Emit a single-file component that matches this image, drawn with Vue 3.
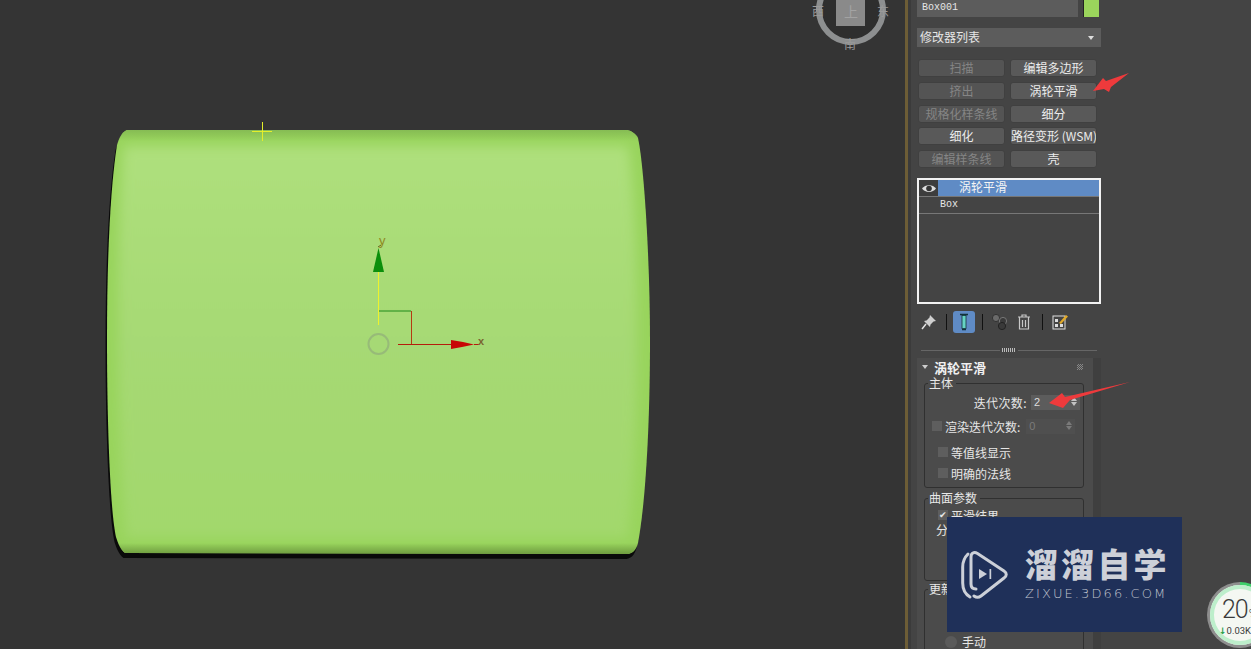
<template>
  <div class="app">
    <main class="viewport">
      <svg class="scene" width="905" height="649" viewBox="0 0 905 649">
        <defs>
          <filter id="soft" x="-10%" y="-10%" width="120%" height="120%">
            <feGaussianBlur stdDeviation="6" />
          </filter>
          <clipPath id="bodyClip"><path :d="bodyPath" /></clipPath>
          <linearGradient id="bodyFill" x1="0" y1="0" x2="0" y2="1">
            <stop offset="0" stop-color="#aee07c" />
            <stop offset="0.5" stop-color="#a6d974" />
            <stop offset="1" stop-color="#a2d86c" />
          </linearGradient>
          <linearGradient id="topBand" x1="0" y1="0" x2="0" y2="1">
            <stop offset="0" stop-color="#86bc54" />
            <stop offset="1" stop-color="#86bc54" stop-opacity="0" />
          </linearGradient>
          <linearGradient id="bottomBand" x1="0" y1="0" x2="0" y2="1">
            <stop offset="0" stop-color="#6f9c40" stop-opacity="0" />
            <stop offset="1" stop-color="#6f9c40" />
          </linearGradient>
        </defs>
        <!-- shadow edge -->
        <path :d="bodyPath" fill="#0a0a0a" transform="translate(-1.5 5)" />
        <path :d="bodyPath" fill="#98d45c" />
        <g clip-path="url(#bodyClip)">
          <path d="M124 146 L628 146 C640 220 640 440 628 538 L126 538 C116 440 116 220 124 146 Z" fill="url(#bodyFill)" filter="url(#soft)" />
          <rect x="100" y="130" width="560" height="11" fill="url(#topBand)" />
          <rect x="100" y="543" width="560" height="11" fill="url(#bottomBand)" />
        </g>

        <!-- cursor -->
        <path d="M252 131.5H272M262.5 122V141" stroke="#e4ef2a" stroke-width="1" />

        <!-- transform gizmo -->
        <path d="M378.5 272V325" stroke="#eef22c" stroke-width="1" />
        <path d="M378.5 248L384 272H373Z" fill="#0b8f0b" />
        <path d="M379 311H411" stroke="#1f8a1a" stroke-width="1" />
        <path d="M411.5 311V344" stroke="#b53a12" stroke-width="1" />
        <path d="M398 344.5H451" stroke="#b51c0c" stroke-width="1" />
        <path d="M451 340L463 342L474 344.5L462 347L451 349Z" fill="#c80606" />
        <path d="M474 344.5H479" stroke="#b51c0c" stroke-width="1" />
        <circle cx="378.500" cy="344" r="10" fill="none" stroke="#97bb78" stroke-width="2" />
        <path d="M378 247L381 245" stroke="#6b5b1c" stroke-width="1" />
        <text x="379" y="245" class="axis axis-y">y</text>
        <text x="478" y="345" class="axis axis-x">x</text>

        <!-- view compass -->
        <circle cx="851" cy="10" r="32" fill="#2e2e2e" stroke="#8d8f90" stroke-width="6" />
        <rect x="836" y="-4" width="29" height="30" fill="#8a8a8a" />
        <text x="851" y="17" class="cube-label">上</text>
        <text x="818" y="16" class="compass">西</text>
        <text x="883" y="16" class="compass">东</text>
        <text x="850" y="49" class="compass">南</text>
      </svg>
    </main>

    <aside class="panel">
      <div class="column">
        <div class="name-row">
          <div class="name-field">Box001</div>
          <div class="swatch"></div>
        </div>
        <div class="dropdown">
          <span>修改器列表</span>
          <i class="caret"></i>
        </div>
        <div class="mod-grid">
          <button v-for="b in modButtons" :key="b.label" class="mod-btn" :class="{ off: b.off }">{{ b.label }}</button>
        </div>
        <div class="stack">
          <div class="stack-top">
            <span class="eye">
              <svg width="16" height="11" viewBox="0 0 16 11">
                <path d="M1 5.5C4 1 12 1 15 5.5C12 10 4 10 1 5.5Z" fill="#ddd" />
                <circle cx="8" cy="5.5" r="2.8" fill="#333" />
              </svg>
            </span>
            <span class="stack-name">涡轮平滑</span>
          </div>
          <div class="stack-box">Box</div>
        </div>
        <div class="tools">
          <svg class="tool" width="18" height="18" viewBox="0 0 18 18">
            <path d="M10 2L16 8L13.5 8.5L10.5 11.5L10 14L4 8L6.500 7.5L9.5 4.5Z" fill="#cfcfcf" />
            <path d="M6 11L2 16" stroke="#e4e4e4" stroke-width="1.500" />
          </svg>
          <i class="tool-sep first"></i>
          <span class="tool-on">
            <svg width="10" height="18" viewBox="0 0 10 18">
              <path d="M1 1.5H9M3 16.5H7" stroke="#12333b" stroke-width="1.5" fill="none" />
              <rect x="3" y="2.500" width="4" height="13" fill="#66d4c4" stroke="#12333b" stroke-width="0.8" />
            </svg>
          </span>
          <i class="tool-sep"></i>
          <svg class="tool" width="18" height="18" viewBox="0 0 18 18">
            <circle cx="5" cy="5" r="3.600" fill="#6a6a6a" stroke="#333" />
            <circle cx="12" cy="8" r="3.600" fill="#3a3a3a" stroke="#777" />
            <circle cx="11" cy="13" r="3.600" fill="#3a3a3a" stroke="#222" />
          </svg>
          <svg class="tool trash" width="14" height="18" viewBox="0 0 14 18">
            <path d="M1 4H13M5 4V2H9V4M2.5 4.5V16H11.5V4.5M5.5 7V14M8.5 7V14" stroke="#c8c8c8" stroke-width="1.2" fill="none" />
          </svg>
          <i class="tool-sep last"></i>
          <svg class="tool" width="18" height="18" viewBox="0 0 18 18">
            <rect x="2" y="3" width="12" height="13" fill="#444" stroke="#ddd" />
            <path d="M4 6H7V9H4ZM9 11H12V14H9ZM4 11H7V14H4Z" fill="#ddd" />
            <path d="M8 10L15 2L17 3.500L10 11Z" fill="#e0a92a" />
          </svg>
        </div>
        <div class="divider"><span class="grip"></span></div>

        <section class="rollout">
          <header class="roll-head">
            <i class="roll-caret"></i>
            <b>涡轮平滑</b>
            <span class="dots"></span>
          </header>

          <fieldset class="group main-group">
            <legend>主体</legend>
            <div class="spin-row">
              <label class="wide">迭代次数:</label>
              <span class="spinner">2<i class="spin-arrows"></i></span>
            </div>
            <div class="spin-row dim">
              <i class="check outer"></i>
              <label>渲染迭代次数:</label>
              <span class="spinner off">0<i class="spin-arrows"></i></span>
            </div>
            <div class="check-row first"><i class="check"></i>等值线显示</div>
            <div class="check-row"><i class="check"></i>明确的法线</div>
          </fieldset>

          <fieldset class="group surface-group">
            <legend>曲面参数</legend>
            <div class="check-row smooth"><i class="check ticked">✔</i>平滑结果</div>
            <div class="sep-label">分</div>
          </fieldset>

          <fieldset class="group update-group">
            <legend>更新</legend>
            <div class="radio-row"><i class="radio"></i>手动</div>
          </fieldset>
        </section>
      </div>
    </aside>

    <svg class="callouts" width="1251" height="649" viewBox="0 0 1251 649">
      <path d="M1093 91L1103 78L1106 81L1129 73L1111 87L1109 92L1104 89Z" fill="#ee3a3c" />
      <path d="M1049 403L1062 393L1065 397L1130 382L1070 400L1063 408Z" fill="#ee3a3c" />
    </svg>

    <div class="watermark">
      <svg class="wm-logo" width="50" height="50" viewBox="0 0 50 50">
        <path d="M8 3C4 7 2.700 11 2.700 16V32C2.700 38 5 43 10 46" fill="none" stroke="#ccd0d8" stroke-width="3" stroke-linecap="round" />
        <path d="M16 38C12.500 38 11 36 11 33V6C11 2 14 0.500 17.500 2.500L44 20C47 22 47 25 44 27L21 45C19 46.500 16 46.500 14 45" fill="none" stroke="#ccd0d8" stroke-width="3" stroke-linecap="round" stroke-linejoin="round" />
        <path d="M19 18L27 23L19 28Z" fill="#ccd0d8" />
        <rect x="29.500" y="18" width="1.700" height="10" fill="#ccd0d8" />
      </svg>
      <div class="wm-text">
        <div class="wm-title">溜溜自学</div>
        <div class="wm-url">ZIXUE.3D66.COM</div>
      </div>
    </div>

    <div class="speed">
      <div class="speed-face">
        <span class="speed-num">20<small>%</small></span>
        <span class="speed-rate"><i>↓</i>0.03K</span>
      </div>
    </div>
  </div>
</template>

<script setup>
const bodyPath = 'M127 130 L627 130 C632 131 636 134 638 138 C644 165 650 260 650 340 C650 420 646 500 638 543 C636 550 633 553 628 554 L125 553 C120 549 118 543 116 537 C110 510 107 420 107 340 C107 260 110 190 117 145 C119 138 122 132 127 130 Z'

const modButtons = [
  { label: '扫描', off: true },
  { label: '编辑多边形' },
  { label: '挤出', off: true },
  { label: '涡轮平滑' },
  { label: '规格化样条线', off: true },
  { label: '细分' },
  { label: '细化' },
  { label: '路径变形 (WSM)' },
  { label: '编辑样条线', off: true },
  { label: '壳' },
]
</script>

<style>
html, body { margin: 0; background: #444; overflow: hidden; }
</style>

<style scoped>
.app {
  position: relative;
  display: flex;
  width: 1251px;
  height: 649px;
  overflow: hidden;
  font-family: "Noto Sans CJK SC", "Liberation Sans", sans-serif;
  font-size: 12px;
  color: #e6e6e6;
}

.viewport { width: 905px; height: 649px; background: #343434; flex: none; }
.scene { display: block; }
.axis { font-family: "Liberation Sans", sans-serif; font-size: 13px; }
.axis-y { fill: #8f8a24; }
.axis-x { fill: #7a6530; font-weight: bold; font-size: 11px; }
.compass { font-size: 12px; fill: #9a9a9a; text-anchor: middle; }
.cube-label { font-size: 14px; fill: #a3a3a3; text-anchor: middle; }

.panel {
  display: flex;
  flex: 1;
  background: #444;
  border-left: 3px solid #6d5d36;
  box-shadow: inset 3px 0 0 #3b3b3b;
  padding-left: 9px;
  min-width: 0;
}
.column { width: 184px; flex: none; position: relative; }

.name-row { display: flex; height: 17px; gap: 5px; }
.name-field {
  width: 161px;
  background: #5c5c5c;
  padding-left: 5px;
  box-sizing: border-box;
  font-family: "Liberation Mono", monospace;
  font-size: 10px;
  line-height: 15px;
}
.swatch { width: 16px; box-sizing: border-box; background: #9bd55c; border-left: 1px solid #222; }

.dropdown {
  display: flex;
  align-items: center;
  justify-content: space-between;
  height: 19px;
  margin-top: 11px;
  padding: 0 7px 2px 3px;
  box-sizing: border-box;
  background: #5c5c5c;
}
.caret { border: 3px solid transparent; border-top: 4px solid #ddd; border-bottom: 0; margin-top: 2px; }

.mod-grid {
  display: grid;
  grid-template-columns: 87px 87px;
  grid-auto-rows: 18px;
  column-gap: 5px;
  row-gap: 4.75px;
  margin: 12px 0 0 1px;
}
.mod-btn {
  padding: 0 0 1px;
  border: 1px solid #404040;
  border-radius: 3px;
  background: #595959;
  color: #ececec;
  font: 12px/13px "Noto Sans CJK SC", sans-serif;
  white-space: nowrap;
  overflow: hidden;
}
.mod-btn.off { color: #858585; background: #545454; }

.stack {
  height: 126px;
  margin-top: 10px;
  border: 2px solid #f2f2f2;
  box-sizing: border-box;
  background: #444;
}
.stack-top { display: flex; height: 16px; border-bottom: 1px solid #777; }
.eye { display: flex; align-items: center; justify-content: center; width: 19px; background: #3d3d3d; }
.stack-name { flex: 1; padding-left: 21px; background: #5f8bc5; color: #f4f4f4; line-height: 14px; }
.stack-box {
  height: 16px;
  padding-left: 21px;
  border-bottom: 1px solid #777;
  font-family: "Liberation Mono", monospace;
  font-size: 10px;
  line-height: 15px;
}

.tools { display: flex; align-items: center; height: 22px; margin: 7px 0 0 3px; }
.tool { flex: none; }
.tool-sep { width: 1px; height: 16px; margin: 0 8px 0 7px; background: #111; }
.tool-sep.first { margin: 0 6px 0 8px; }
.tool-sep.last { margin-left: 11px; }
.tool-on {
  display: flex;
  align-items: center;
  justify-content: center;
  width: 22px;
  height: 22px;
  border-radius: 3px;
  background: #5f8bc5;
}
.trash { margin-left: 8px; }

.divider { position: relative; height: 1px; margin: 17px 4px 0 4px; background: #666; }
.grip {
  position: absolute;
  left: 81px;
  top: -2px;
  width: 14px;
  height: 4px;
  background: repeating-linear-gradient(90deg, #bbb 0 1px, #444 1px 2px);
  outline: 2px solid #444;
}

.rollout {
  position: relative;
  width: 176px;
  height: 300px;
  margin-top: 7px;
  background: #4b4b4b;
  box-sizing: border-box;
  padding: 0 9px 0 7px;
  box-shadow: 8px 0 0 #3f3f3f;
}
.roll-head { display: flex; align-items: center; height: 18px; margin: 0 -7px 0 -2px; }
.roll-head b { margin-left: 6px; font-size: 13px; color: #f0f0f0; }
.roll-caret { border: 3px solid transparent; border-top: 4px solid #ccc; border-bottom: 0; }
.dots {
  margin-left: auto;
  margin-right: 8px;
  width: 6px;
  height: 6px;
  background: repeating-conic-gradient(#888 0 25%, #4b4b4b 0 50%) 0 0 / 2px 2px;
}

.group {
  margin: 0;
  padding: 0;
  min-width: 0;
  border: 1px solid #303030;
  border-radius: 3px;
  box-sizing: border-box;
}
.group legend { padding: 0 3px 0 1px; margin-left: 3px; line-height: 14px; color: #e8e8e8; }
.main-group { height: 112px; }
.surface-group { height: 90px; margin-top: 3px; }
.update-group { height: 70px; margin-top: 1px; }

.spin-row { display: flex; align-items: center; height: 16px; margin-top: 4px; }
.spin-row label { margin-left: auto; margin-right: 4px; }
.spin-row label.wide { letter-spacing: 0.4px; }
.spin-row.dim { margin-top: 8px; }
.spin-row.dim label { margin-left: 3px; margin-right: 6px; }
.spinner {
  position: relative;
  display: block;
  width: 49px;
  height: 15px;
  margin-right: 3px;
  padding-left: 3px;
  box-sizing: border-box;
  background: #5c5c5c;
  line-height: 15px;
  font-family: "Liberation Sans", sans-serif;
  font-size: 11px;
  color: #dcdcdc;
}
.spinner.off { background: #4f4f4f; color: #7b7b7b; }
.spin-arrows {
  position: absolute;
  right: 3px;
  top: 2px;
  width: 0;
  height: 0;
  border-left: 3px solid transparent;
  border-right: 3px solid transparent;
  border-bottom: 4px solid #c4c4c4;
}
.spin-arrows::after {
  content: "";
  position: absolute;
  left: -3px;
  top: 5px;
  border-left: 3px solid transparent;
  border-right: 3px solid transparent;
  border-top: 4px solid #c4c4c4;
}
.spinner.off .spin-arrows { border-bottom-color: #7a7a7a; }
.spinner.off .spin-arrows::after { border-top-color: #7a7a7a; }

.check {
  display: block;
  flex: none;
  width: 10px;
  height: 10px;
  background: #5e5e5e;
  font-style: normal;
  font-size: 9px;
  line-height: 10px;
  text-align: center;
  color: #e8e8e8;
}
.check.outer { margin-left: 7px; }
.check-row { display: flex; align-items: center; gap: 3px; height: 16px; padding-left: 13px; }
.check-row.first { margin-top: 10px; }
.check-row + .check-row { margin-top: 5px; }
.check-row.smooth { margin-top: 2px; padding-left: 13px; }
.sep-label { padding-left: 11px; margin-top: -2px; }

.radio-row { display: flex; align-items: center; gap: 5px; margin-top: 37px; padding-left: 20px; }
.radio { display: block; width: 12px; height: 12px; border-radius: 50%; background: #5a5a5a; }

.callouts { position: absolute; inset: 0; pointer-events: none; }

.watermark {
  position: absolute;
  left: 947px;
  top: 517px;
  display: flex;
  width: 235px;
  height: 115px;
  box-sizing: border-box;
  padding: 34px 0 0 13px;
  background: #1f3059;
  color: #cdd0d8;
}
.wm-logo { flex: none; }
.wm-text { margin-left: 15px; margin-top: -6px; }
.wm-title { font-size: 33px; font-weight: 900; line-height: 36px; letter-spacing: 3.2px; white-space: nowrap; }
.wm-url {
  margin-top: 6px;
  font-family: "DejaVu Sans", sans-serif;
  font-weight: 200;
  font-size: 13px;
  line-height: 14px;
  letter-spacing: 2.1px;
  color: #c0c4ce;
  white-space: nowrap;
}

.speed {
  position: absolute;
  left: 1207px;
  top: 582px;
  width: 66px;
  height: 66px;
  padding: 3px;
  box-sizing: border-box;
  border-radius: 50%;
  background: conic-gradient(#3fd06b 0 22%, #8e8e8e 0);
}
.speed-face {
  position: relative;
  width: 100%;
  height: 100%;
  border-radius: 50%;
  background: #f4f7f2;
  box-shadow: inset 0 0 0 4px #bdeecb;
  color: #3a3a3a;
  font-family: Roboto, "Liberation Sans", sans-serif;
}
.speed-num { position: absolute; left: 12px; top: 12px; font-size: 25px; font-weight: 300; line-height: 26px; letter-spacing: -1px; white-space: nowrap; }
.speed-num small { font-size: 12px; margin-left: 1px; }
.speed-rate { position: absolute; left: 9px; top: 40px; font-size: 9.5px; line-height: 12px; white-space: nowrap; }
.speed-rate i { color: #1f9e48; font-family: "DejaVu Sans", sans-serif; font-style: normal; font-weight: bold; font-size: 9px; }
</style>
